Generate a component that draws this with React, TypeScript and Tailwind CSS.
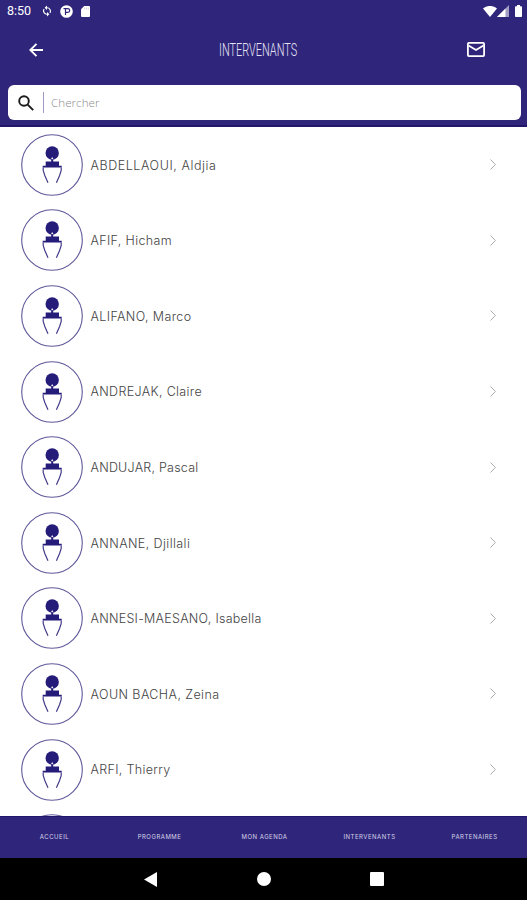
import { clsx } from "clsx";

interface Speaker {
  name: string;
  tracking: string;
}

const speakers: Speaker[] = [
  { name: "ABDELLAOUI, Aldjia", tracking: "tracking-[0.57px]" },
  { name: "AFIF, Hicham", tracking: "tracking-[0.35px]" },
  { name: "ALIFANO, Marco", tracking: "tracking-[0.38px]" },
  { name: "ANDREJAK, Claire", tracking: "tracking-[0.35px]" },
  { name: "ANDUJAR, Pascal", tracking: "tracking-[0.24px]" },
  { name: "ANNANE, Djillali", tracking: "tracking-[0.41px]" },
  { name: "ANNESI-MAESANO, Isabella", tracking: "tracking-[0.27px]" },
  { name: "AOUN BACHA, Zeina", tracking: "tracking-[0.42px]" },
  { name: "ARFI, Thierry", tracking: "tracking-[0.33px]" },
  { name: "", tracking: "" },
];

const tabs = ["ACCUEIL", "PROGRAMME", "MON AGENDA", "INTERVENANTS", "PARTENAIRES"];

const StatusBar = () => (
  <div className="flex h-[22px] items-center pl-[7px] pr-[5px] text-white">
    <span className="w-[34px] font-['Roboto'] text-[12.500px] leading-none">8:50</span>
    {/* sync */}
    <svg className="size-3" viewBox="0 0 24 24" fill="none" stroke="currentColor" strokeWidth="2.4">
      <path d="M11 5.500h1a7 7 0 0 1 6 10.500M13 18.500h-1A7 7 0 0 1 6 8" />
      <path d="M12 .8v9.400L7.300 5.500zM12 13.800v9.400l4.700-4.700z" fill="currentColor" stroke="none" />
    </svg>
    {/* round P badge */}
    <svg className="ml-[7px] size-[13px]" viewBox="0 0 13 13">
      <circle cx="6.500" cy="6.500" r="6.300" fill="currentColor" />
      <path d="M3.500 3.600h4.300a1.900 1.900 0 0 1 0 3.800H5.900M5.500 3.600V10" fill="none" stroke="#2f267b" strokeWidth="1.200" />
    </svg>
    {/* sd card */}
    <svg className="ml-2 h-[11px] w-[9px]" viewBox="0 0 9 11" fill="currentColor">
      <path d="M3.200 0H8a1 1 0 0 1 1 1v9a1 1 0 0 1-1 1H1a1 1 0 0 1-1-1V3.200z" />
      <path d="M3.700 1.500v2M5.500 1.500v2M7.300 1.500v2" stroke="#2f267b" strokeWidth=".4" opacity=".5" />
    </svg>
    <div className="ml-auto flex items-center">
      <svg className="h-[11px] w-[14px]" viewBox="0 0 14 11" fill="currentColor">
        <path d="M0 2.600C4-.9 10-.9 14 2.600L7 11z" />
      </svg>
      <svg className="size-3" viewBox="0 0 12 12" fill="currentColor">
        <path d="M12 0v12H0z" opacity=".55" />
        <path d="M8.500 3.500V12H0z" />
      </svg>
      <svg className="ml-[6px] h-3 w-[7px]" viewBox="0 0 7 12" fill="currentColor">
        <path d="M2 0h3v1.200h1.200a.8.8 0 0 1 .8.8v9.200a.8.8 0 0 1-.8.8H.8a.8.8 0 0 1-.8-.8V2a.8.8 0 0 1 .8-.8H2z" />
      </svg>
    </div>
  </div>
);

const TitleBar = () => (
  <div className="flex h-[55px] items-center pl-[29px] pr-[42px] text-white">
    <svg className="size-[14px]" viewBox="0 0 14 14" fill="none" stroke="currentColor" strokeWidth="1.900">
      <path d="M14 7H1.500M7.500 .8L1.300 7l6.200 6.200" />
    </svg>
    <div className="flex flex-1 justify-center pl-[8px] pt-[2px]">
      <h1 className="w-[80px] origin-left scale-x-[0.59] whitespace-nowrap font-['Roboto'] text-[18.500px] font-light leading-none text-[#e5e2f5]">
        INTERVENANTS
      </h1>
    </div>
    <svg className="h-[15px] w-[18px]" viewBox="0 0 18 15" fill="none" stroke="currentColor" strokeWidth="1.800">
      <rect x=".9" y=".9" width="16.200" height="13.200" rx="1" />
      <path d="M1.500 3.400L9 8l7.500-4.600" />
    </svg>
  </div>
);

const SearchBox = () => (
  <div className="ml-[7.500px] mr-[6px] mt-2 flex h-[35px] items-center rounded-[6px] bg-white pl-[10px]">
    <svg className="size-4" viewBox="0 0 16 16" fill="none" stroke="#1b1b1b" strokeWidth="1.900">
      <circle cx="6" cy="6" r="4.800" />
      <path d="M9.700 9.700l5.500 5.500" />
    </svg>
    <div className="ml-[9.500px] h-[21px] w-px bg-[#9d98c4]" />
    <span className="ml-[7px] font-['Open_Sans'] text-[11.700px] font-light leading-none text-[#8c8c8c]">Chercher</span>
  </div>
);

const Avatar = () => (
  <svg className="size-[62px] shrink-0" viewBox="0 0 62 62" fill="none">
    <circle cx="31" cy="31" r="30.300" stroke="#5f599a" strokeWidth="1.100" />
    <circle cx="31.200" cy="19" r="6.700" fill="#251b78" />
    <path d="M30.200 25h2v3h-2z" fill="#251b78" />
    <path d="M24.700 27.600H38v4.200h2.700v1.700H21.700v-1.700h3z" fill="#251b78" />
    <path d="M31.200 23.200l1.100 1.100-1.100 1.100-1.100-1.100z" fill="#fff" />
    <path d="M22.200 33.500v3l1.600 5 3.200 7.200M40.200 33.500v3l-1.600 5-3.200 7.200" stroke="#433b89" strokeWidth="1.200" />
  </svg>
);

const SpeakerRow = ({ name, tracking }: Speaker) => (
  <li className="flex h-[75.600px] shrink-0 items-center pl-[21px] pr-[31px]">
    <Avatar />
    <span
      className={clsx(
        "ml-[7.500px] whitespace-nowrap pt-[2px] font-['Inter'] text-[12.500px] font-light leading-none text-[#444]",
        tracking,
      )}
    >
      {name}
    </span>
    <svg className="ml-auto h-[11px] w-[6px]" viewBox="0 0 6 11" fill="none" stroke="#aaa" strokeWidth="1">
      <path d="M.5 .5l4.900 5-4.900 5" />
    </svg>
  </li>
);

const TabBar = () => (
  <nav className="grid h-[42px] grid-cols-5 items-center border-t border-[#21176c] bg-[#2f267b] pb-[2px] pl-[2px] text-center">
    {tabs.map((tab) => (
      <span key={tab} className="whitespace-nowrap font-['Inter'] text-[6px] leading-none tracking-[0.5px] text-[#d6d3e8]">
        {tab}
      </span>
    ))}
  </nav>
);

const SystemNav = () => (
  <div className="flex h-[42px] items-center bg-black pl-[144px]">
    <svg className="h-[15px] w-[13px]" viewBox="0 0 13 15" fill="#fff">
      <path d="M13 0v15L0 7.500z" />
    </svg>
    <div className="ml-[100px] size-[14px] rounded-full bg-white" />
    <div className="ml-[99px] size-[14px] rounded-[1px] bg-white" />
  </div>
);

export default function App() {
  return (
    <div className="flex h-[900px] w-[527px] flex-col overflow-hidden bg-white">
      <header className="h-[127px] shrink-0 border-b-2 border-[#21176c] bg-[#2f267b]">
        <StatusBar />
        <TitleBar />
        <SearchBox />
      </header>
      <ul className="flex min-h-0 flex-1 flex-col overflow-hidden">
        {speakers.map((speaker) => (
          <SpeakerRow key={speaker.name} {...speaker} />
        ))}
      </ul>
      <TabBar />
      <SystemNav />
    </div>
  );
}
